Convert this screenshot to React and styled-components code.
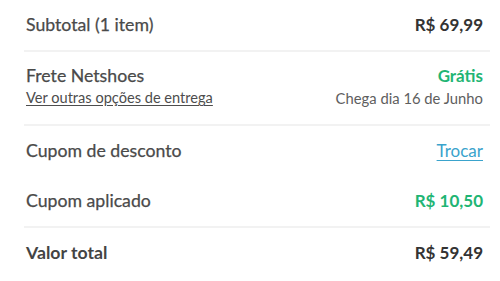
import React from "react";
import styled, { createGlobalStyle } from "styled-components";

const GlobalStyle = createGlobalStyle`
  html, body {
    margin: 0;
    padding: 0;
    background: #fff;
  }
  body {
    font-family: "Lato", "Open Sans", sans-serif;
    -webkit-font-smoothing: antialiased;
  }
`;

const Summary = () => {
  return (
    <Wrapper>
      <Section>
        <Row>
          <Label>Subtotal (1 item)</Label>
          <Value>R$ 69,99</Value>
        </Row>
      </Section>
      <Section $tall>
        <Row>
          <Label>Frete Netshoes</Label>
          <Value $green>Grátis</Value>
        </Row>
        <Row>
          <SubLink href="#">Ver outras opções de entrega</SubLink>
          <Note>Chega dia 16 de Junho</Note>
        </Row>
      </Section>
      <Section>
        <Row>
          <Label>Cupom de desconto</Label>
          <Action href="#">Trocar</Action>
        </Row>
        <Row>
          <Label>Cupom aplicado</Label>
          <Value $green>R$ 10,50</Value>
        </Row>
      </Section>
      <Section $last>
        <Row>
          <Label $strong>Valor total</Label>
          <Value>R$ 59,49</Value>
        </Row>
      </Section>
    </Wrapper>
  );
};

const Wrapper = styled.main`
  width: 466px;
  margin-left: 24px;
  display: flex;
  flex-direction: column;
`;

const Section = styled.section`
  display: flex;
  flex-direction: column;
  border-bottom: ${(p) => (p.$last ? "none" : "2px solid #f2f2f2")};
  padding: ${(p) => (p.$tall ? "13px 0 15px" : "0")};

  & > div {
    min-height: ${(p) => (p.$tall ? "22px" : "50px")};
  }
`;

const Row = styled.div`
  display: flex;
  align-items: center;
  justify-content: space-between;
  padding: 0 7px 0 2px;
  line-height: 22px;
`;

const Label = styled.span`
  font-size: 17.7px;
  color: ${(p) => (p.$strong ? "#444" : "#4a4a4a")};
  font-weight: ${(p) => (p.$strong ? 700 : 400)};
  -webkit-text-stroke: ${(p) => (p.$strong ? "0" : "0.25px")};
`;

const Value = styled.span`
  font-size: 17px;
  font-weight: 700;
  color: ${(p) => (p.$green ? "#1fb574" : "#333")};
`;

const SubLink = styled.a`
  font-size: 14.6px;
  color: #4d4d4d;
  text-decoration: underline;
  text-underline-offset: 2px;
`;

const Note = styled.span`
  font-size: 14.8px;
  color: #5e5e5e;
`;

const Action = styled.a`
  font-size: 17px;
  color: #3aa3cc;
  text-decoration: underline;
  text-underline-offset: 3px;
`;

const App = () => (
  <>
    <GlobalStyle />
    <Summary />
  </>
);

export default App;
